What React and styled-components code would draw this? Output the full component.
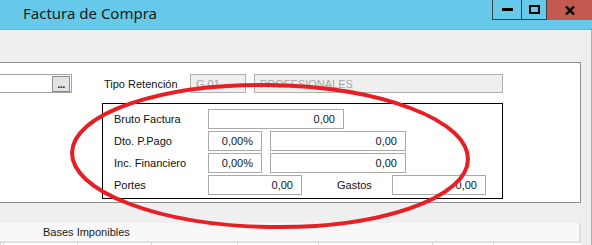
import React from 'react';
import styled, { createGlobalStyle } from 'styled-components';

const Global = createGlobalStyle`
  html, body { margin: 0; padding: 0; background: #efefef; overflow: hidden; }
  #root { width: 592px; height: 245px; }
`;

const Window = styled.div`
  position: relative;
  width: 592px;
  height: 245px;
  background: #efefef;
  display: flex;
  flex-direction: column;
  overflow: hidden;
  font-family: "Liberation Sans", Arial, sans-serif;
  font-size: 11px;
  color: #111;
`;

const TitleBar = styled.div`
  height: 29px;
  flex: none;
  background: #66c9e9;
  border-bottom: 1px solid #5db7d5;
  display: flex;
  align-items: flex-start;
`;

const Title = styled.div`
  flex: 1;
  padding-left: 23px;
  padding-top: 3px;
  font-family: "Noto Sans", sans-serif;
  font-size: 15px;
  line-height: 20px;
  color: #1b1b1b;
`;

const CaptionButton = styled.div`
  width: ${(p) => p.$w}px;
  height: 20px;
  box-sizing: border-box;
  border-left: 1px solid #3e3e3e;
  border-bottom: ${(p) => (p.$close ? 'none' : '1px solid #3e3e3e')};
  background: ${(p) => (p.$close ? '#c35a50' : 'transparent')};
  display: flex;
  align-items: center;
  justify-content: center;
`;

const Body = styled.div`
  flex: 1;
  display: flex;
  flex-direction: column;
  padding-top: 32px;
  border-right: 1px solid #66c9e9;
`;

const Panel = styled.div`
  width: 581px;
  height: 141px;
  box-sizing: border-box;
  background: #fff;
  border-top: 1px solid #8e8e93;
  border-right: 1px solid #8e8e93;
  border-bottom: 1px solid #8e8e93;
  padding-top: 11px;
  display: flex;
  flex-direction: column;
`;

const TopRow = styled.div`
  display: flex;
  align-items: center;
  height: 19px;
`;

const LookupField = styled.div`
  width: 72px;
  height: 19px;
  box-sizing: border-box;
  border: 1px solid #a3a3a3;
  border-left: none;
  background: #fff;
  display: flex;
  justify-content: flex-end;
  align-items: center;
  padding-right: 1px;
`;

const DotsButton = styled.div`
  width: 18px;
  height: 16px;
  box-sizing: border-box;
  border: 1px solid #8c8c8c;
  background: #e3e3e3;
  color: #1a237e;
  font-size: 11px;
  line-height: 14px;
  text-align: center;
  font-weight: bold;
  letter-spacing: -0.5px;
`;

const Label = styled.div`
  width: ${(p) => p.$w}px;
  margin-left: ${(p) => p.$ml || 0}px;
  flex: none;
  white-space: nowrap;
  line-height: 14px;
  color: #111;
`;

const Field = styled.div`
  width: ${(p) => p.$w}px;
  height: ${(p) => p.$h || 20}px;
  margin-left: ${(p) => p.$ml || 0}px;
  flex: none;
  box-sizing: border-box;
  border: 1px solid ${(p) => (p.$disabled ? '#b0b0b0' : '#a9a9a9')};
  background: ${(p) => (p.$disabled ? '#efefef' : '#fff')};
  color: ${(p) => (p.$disabled ? '#a6a6a6' : '#101828')};
  display: flex;
  align-items: center;
  justify-content: ${(p) => (p.$left ? 'flex-start' : 'flex-end')};
  padding: ${(p) => (p.$left ? '0 0 0 5px' : '0 8px 0 0')};
  white-space: nowrap;
  overflow: hidden;
  line-height: 14px;
`;

const TotalsBox = styled.div`
  margin-top: 10px;
  margin-left: 102px;
  width: 401px;
  height: 96px;
  box-sizing: border-box;
  border: 1px solid #000;
  padding: 5px 0 0 11px;
  display: flex;
  flex-direction: column;
  gap: 2px;
`;

const BoxRow = styled.div`
  display: flex;
  align-items: center;
  height: 20px;
`;

const BasesRow = styled.div`
  margin-top: 20px;
  width: 581px;
  height: 19px;
  box-sizing: border-box;
  background: #f8f8f8;
  border-right: 2px solid #e0e0e0;
  border-bottom: 1px solid #e4e4e4;
  padding-left: 43px;
  display: flex;
  align-items: center;
  color: #1a1a1a;
`;

const HeaderStrip = styled.div`
  display: flex;
  height: 3px;
  width: 581px;
`;

const HeaderCell = styled.div`
  width: ${(p) => p.$w}px;
  flex: none;
  box-sizing: border-box;
  border-left: 1px solid #d6d6d6;
  border-top: 1px solid #dcdcdc;
  background: #fff;
`;

const Annotation = styled.svg`
  position: absolute;
  left: 0;
  top: 0;
  pointer-events: none;
`;

export default function App() {
  return (
    <>
      <Global />
      <Window>
        <TitleBar>
          <Title>Factura de Compra</Title>
          <CaptionButton $w={29}>
            <svg width="11" height="3" viewBox="0 0 11 3"><rect width="11" height="3" fill="#000" /></svg>
          </CaptionButton>
          <CaptionButton $w={25}>
            <svg width="11" height="9" viewBox="0 0 11 9"><rect x="1" y="1" width="9" height="7" fill="none" stroke="#000" strokeWidth="2" /></svg>
          </CaptionButton>
          <CaptionButton $w={46} $close>
            <svg width="10" height="9" viewBox="0 0 10 9"><path d="M1 0.5 L9 8.5 M9 0.5 L1 8.5" stroke="#000" strokeWidth="2.4" /></svg>
          </CaptionButton>
        </TitleBar>
        <Body>
          <Panel>
            <TopRow>
              <LookupField>
                <DotsButton>...</DotsButton>
              </LookupField>
              <Label $w={86} $ml={32}>Tipo Retención</Label>
              <Field $w={56} $h={19} $disabled $left>G 01</Field>
              <Field $w={249} $h={19} $ml={8} $disabled $left>PROFESIONALES</Field>
            </TopRow>
            <TotalsBox>
              <BoxRow>
                <Label $w={94}>Bruto Factura</Label>
                <Field $w={136}>0,00</Field>
              </BoxRow>
              <BoxRow>
                <Label $w={94}>Dto. P.Pago</Label>
                <Field $w={54}>0,00%</Field>
                <Field $w={136} $ml={8}>0,00</Field>
              </BoxRow>
              <BoxRow>
                <Label $w={94}>Inc. Financiero</Label>
                <Field $w={54}>0,00%</Field>
                <Field $w={136} $ml={8}>0,00</Field>
              </BoxRow>
              <BoxRow>
                <Label $w={94}>Portes</Label>
                <Field $w={94}>0,00</Field>
                <Label $w={55} $ml={35}>Gastos</Label>
                <Field $w={94}>0,00</Field>
              </BoxRow>
            </TotalsBox>
          </Panel>
          <BasesRow>Bases Imponibles</BasesRow>
          <HeaderStrip>
            <HeaderCell $w={3} />
            <HeaderCell $w={74} />
            <HeaderCell $w={74} />
            <HeaderCell $w={86} />
            <HeaderCell $w={81} />
            <HeaderCell $w={114} />
            <HeaderCell $w={61} />
            <HeaderCell $w={88} />
          </HeaderStrip>
        </Body>
        <Annotation width="592" height="245" viewBox="0 0 592 245">
          <ellipse cx="270" cy="156" rx="198" ry="71" fill="none" stroke="#e81e25" strokeWidth="4" transform="rotate(1 270 156)" />
        </Annotation>
      </Window>
    </>
  );
}
